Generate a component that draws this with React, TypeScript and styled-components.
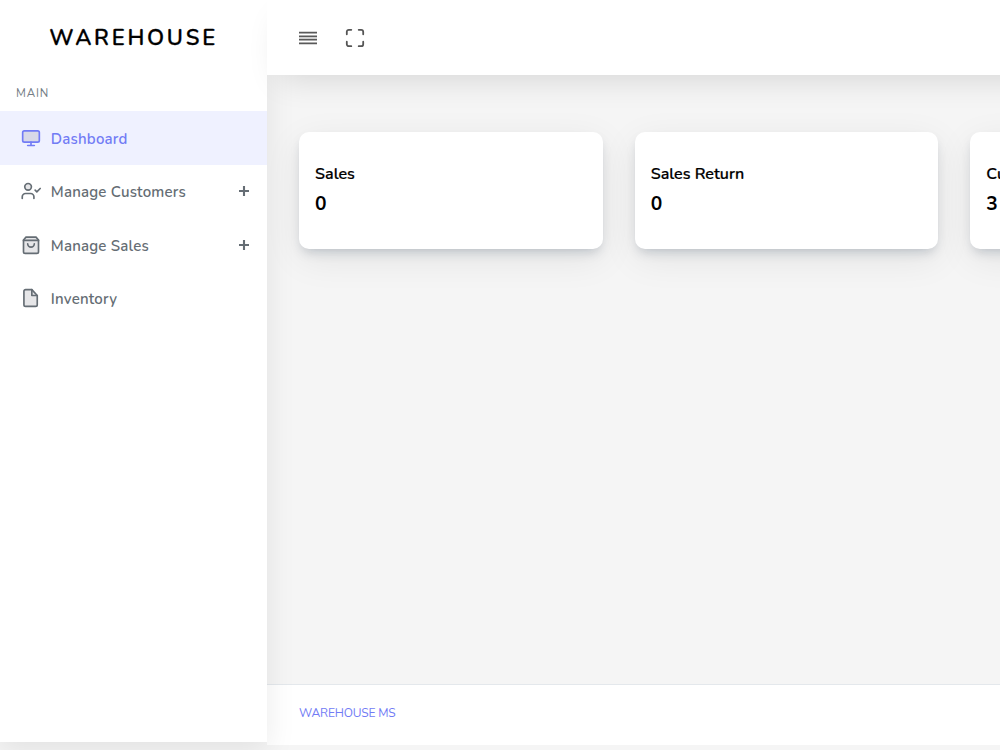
import React from "react";
import styled, { createGlobalStyle } from "styled-components";

const GlobalStyle = createGlobalStyle`
  *, *::before, *::after { box-sizing: border-box; }
  html, body { margin: 0; padding: 0; }
  body {
    width: 1000px;
    height: 750px;
    overflow: hidden;
    background: #f5f5f5;
    font-family: Nunito, Lato, "Noto Sans", sans-serif;
    color: #000;
  }
`;

const Page = styled.div`
  display: flex;
  width: 1000px;
  height: 750px;
  overflow: hidden;
`;

const Sidebar = styled.aside`
  position: relative;
  z-index: 2;
  flex: none;
  width: 267.4px;
  height: 742.4px;
  background: #fff;
  box-shadow: 0 8px 28px 1px rgba(0, 0, 0, 0.08);
`;

const Brand = styled.div`
  height: 75px;
  padding-left: 49.3px;
  line-height: 77px;
  font-size: 22px;
  font-weight: 600;
  letter-spacing: 2.75px;
  white-space: nowrap;
  -webkit-text-stroke: 0.3px #000;
`;

const SectionTitle = styled.div`
  height: 36px;
  padding-left: 16px;
  line-height: 36px;
  font-size: 11.5px;
  letter-spacing: 0.9px;
  color: #757e86;
`;

const Menu = styled.nav`
  display: flex;
  flex-direction: column;
`;

const MenuItem = styled.a<{ $active?: boolean }>`
  display: flex;
  align-items: center;
  height: 53.5px;
  padding: 0 16.2px 0 20.5px;
  color: ${(p) => (p.$active ? "#727cf5" : "#656d74")};
  background: ${(p) => (p.$active ? "#eff1ff" : "transparent")};
  svg { flex: none; margin-bottom: 0.5px; }
`;

const MenuLabel = styled.span`
  flex: 1;
  margin: 2px 0 0 10.3px;
  line-height: 24px;
  font-size: 15px;
  font-weight: 600;
  letter-spacing: 0.2px;
  white-space: nowrap;
`;

const Main = styled.main`
  display: flex;
  flex-direction: column;
  flex: none;
  width: 1300px;
  height: 744.6px;
`;

const Header = styled.header`
  position: relative;
  z-index: 3;
  display: flex;
  align-items: center;
  gap: 27px;
  flex: none;
  height: 75px;
  padding-left: 30.6px;
  background: #fff;
  box-shadow: 5px 12px 32px -8px rgba(0, 0, 0, 0.13);
`;

const Content = styled.section`
  flex: 1;
  display: flex;
  align-items: flex-start;
  gap: 32px;
  padding: 56.6px 0 0 31.7px;
`;

const Card = styled.article`
  flex: none;
  width: 303.6px;
  height: 117px;
  padding: 30px 16px;
  border-radius: 10px;
  background: #fff;
  box-shadow: 0 10px 36px rgba(0, 20, 30, 0.08), 0 6px 12px -4px rgba(30, 50, 80, 0.25);
`;

const CardTitle = styled.div`
  line-height: 24px;
  font-size: 16px;
  font-weight: 600;
  letter-spacing: 0.02px;
  white-space: nowrap;
  -webkit-text-stroke: 0.2px #000;
`;

const CardValue = styled.div`
  margin-top: 4px;
  line-height: 28px;
  font-size: 19.2px;
  font-weight: 700;
`;

const Footer = styled.footer`
  flex: none;
  height: 61px;
  padding-left: 31.7px;
  border-top: 1px solid #e4e8ec;
  background: #fff;
  line-height: 57px;
  font-size: 12px;
  letter-spacing: -0.17px;
  color: #727cf5;
`;

const iconProps = {
  width: 20,
  height: 20,
  viewBox: "0 0 24 24",
  fill: "none",
  stroke: "currentColor",
  strokeWidth: 2,
  strokeLinecap: "round" as const,
  strokeLinejoin: "round" as const,
};

const tint = "rgba(60, 60, 80, 0.13)";

const MonitorIcon = () => (
  <svg {...iconProps}>
    <rect x="2" y="3.5" width="20" height="13.5" rx="2" fill={tint} />
    <path d="M8 21h8M12 17v4" />
  </svg>
);

const UserCheckIcon = () => (
  <svg {...iconProps}>
    <path d="M15.5 21v-2a4 4 0 0 0-4-4H5.5a4 4 0 0 0-4 4v2" />
    <circle cx="8.5" cy="7" r="4" fill={tint} />
    <path d="M17 11l2 2 4-4" />
  </svg>
);

const BagIcon = () => (
  <svg {...iconProps}>
    <path d="M6 2.5L3 6v14a2 2 0 0 0 2 2h14a2 2 0 0 0 2-2V6l-3-3.5z" fill={tint} />
    <path d="M3 6.5h18M16 10.5a4 4 0 0 1-8 0" />
  </svg>
);

const FileIcon = () => (
  <svg {...iconProps}>
    <path d="M13 2H5.5a2 2 0 0 0-2 2v16a2 2 0 0 0 2 2h12a2 2 0 0 0 2-2V9z" fill={tint} />
    <path d="M13 2v7h6.5" />
  </svg>
);

const PlusIcon = () => (
  <svg width="14" height="14" viewBox="0 0 14 14" stroke="currentColor" strokeWidth="2.1">
    <path d="M2 7h10M7 2v10" />
  </svg>
);

const MenuBarsIcon = () => (
  <svg width="20" height="20" viewBox="0 0 20 20" stroke="#595959" strokeWidth="1.6">
    <path d="M1 8h18v4H1z" fill="#d0d0d0" stroke="none" />
    <path d="M1 4.6h18M1 8.2h18M1 11.8h18M1 15.4h18" />
  </svg>
);

const FullscreenIcon = () => (
  <svg width="20" height="20" viewBox="0 0 20 20" fill="none" stroke="#555" strokeWidth="1.8" strokeLinecap="round">
    <path d="M6.3 1.8H3.8a2 2 0 0 0-2 2v2.5M13.7 1.8h2.5a2 2 0 0 1 2 2v2.5M6.3 18.2H3.8a2 2 0 0 1-2-2v-2.5M13.7 18.2h2.5a2 2 0 0 0 2-2v-2.5" />
  </svg>
);

const menu = [
  { label: "Dashboard", Icon: MonitorIcon, active: true },
  { label: "Manage Customers", Icon: UserCheckIcon, expandable: true },
  { label: "Manage Sales", Icon: BagIcon, expandable: true },
  { label: "Inventory", Icon: FileIcon },
];

const stats = [
  { title: "Sales", value: "0" },
  { title: "Sales Return", value: "0" },
  { title: "Customers", value: "3" },
];

export default function App() {
  return (
    <>
      <GlobalStyle />
      <Page>
        <Sidebar>
          <Brand>WAREHOUSE</Brand>
          <SectionTitle>MAIN</SectionTitle>
          <Menu>
            {menu.map(({ label, Icon, active, expandable }) => (
              <MenuItem key={label} $active={active}>
                <Icon />
                <MenuLabel>{label}</MenuLabel>
                {expandable && <PlusIcon />}
              </MenuItem>
            ))}
          </Menu>
        </Sidebar>
        <Main>
          <Header>
            <MenuBarsIcon />
            <FullscreenIcon />
          </Header>
          <Content>
            {stats.map((s) => (
              <Card key={s.title}>
                <CardTitle>{s.title}</CardTitle>
                <CardValue>{s.value}</CardValue>
              </Card>
            ))}
          </Content>
          <Footer>WAREHOUSE MS</Footer>
        </Main>
      </Page>
    </>
  );
}
